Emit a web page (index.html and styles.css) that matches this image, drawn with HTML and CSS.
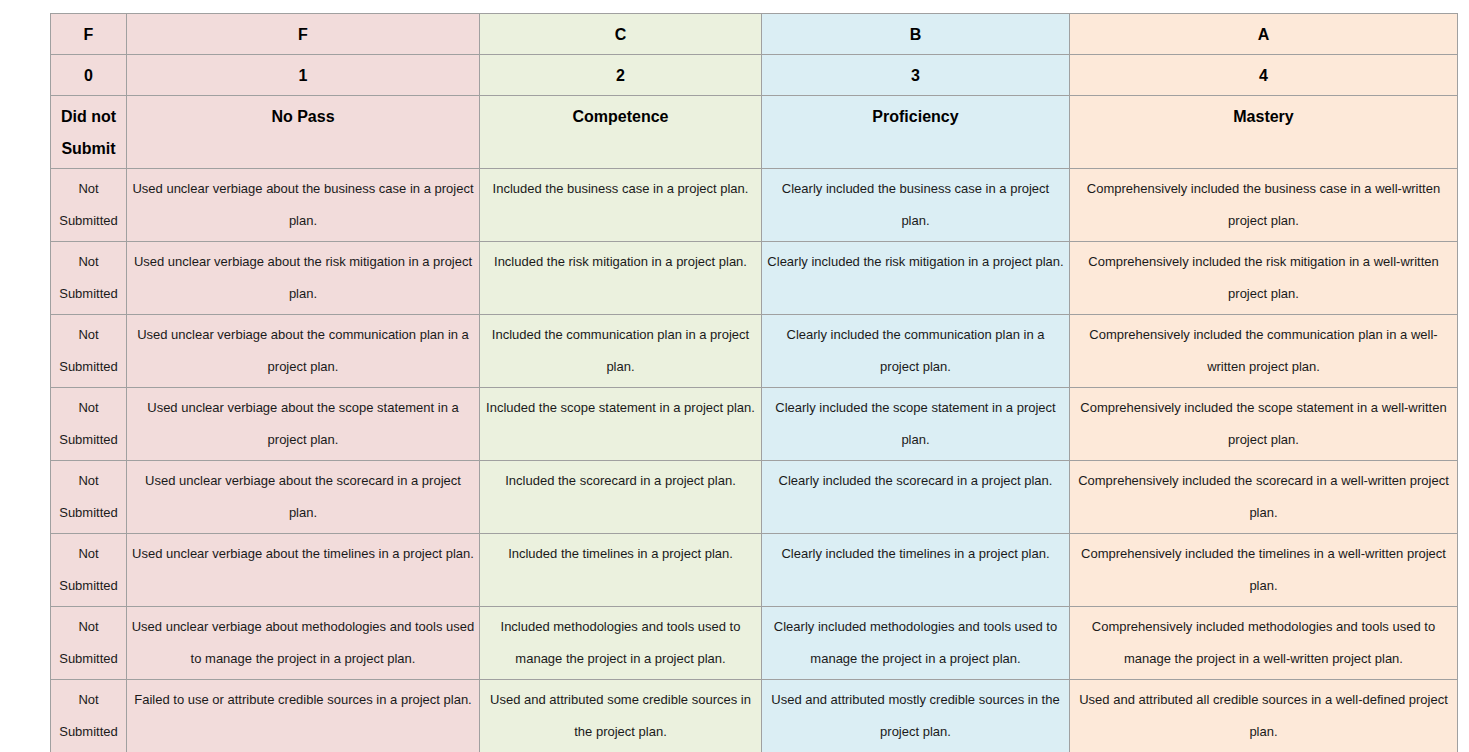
FILE: index.html
```html
<!DOCTYPE html>
<html lang="en">
<head>
<meta charset="utf-8">
<title>Rubric</title>
<link rel="stylesheet" href="styles.css">
</head>
<body>
<table class="rubric">
  <colgroup>
    <col class="c0">
    <col class="c1">
    <col class="c2">
    <col class="c3">
    <col class="c4">
  </colgroup>
  <thead>
    <tr>
      <th class="f">F</th><th class="f">F</th><th class="c">C</th><th class="b">B</th><th class="a">A</th>
    </tr>
    <tr>
      <th class="f">0</th><th class="f">1</th><th class="c">2</th><th class="b">3</th><th class="a">4</th>
    </tr>
    <tr>
      <th class="f">Did not Submit</th><th class="f">No Pass</th><th class="c">Competence</th><th class="b">Proficiency</th><th class="a">Mastery</th>
    </tr>
  </thead>
  <tbody>
    <tr>
      <td class="f">Not Submitted</td>
      <td class="f">Used unclear verbiage about the business case in a project plan.</td>
      <td class="c">Included the business case in a project plan.</td>
      <td class="b">Clearly included the business case in a project plan.</td>
      <td class="a">Comprehensively included the business case in a well-written project plan.</td>
    </tr>
    <tr>
      <td class="f">Not Submitted</td>
      <td class="f">Used unclear verbiage about the risk mitigation in a project plan.</td>
      <td class="c">Included the risk mitigation in a project plan.</td>
      <td class="b">Clearly included the risk mitigation in a project plan.</td>
      <td class="a">Comprehensively included the risk mitigation in a well-written project plan.</td>
    </tr>
    <tr>
      <td class="f">Not Submitted</td>
      <td class="f">Used unclear verbiage about the communication plan in a project plan.</td>
      <td class="c">Included the communication plan in a project plan.</td>
      <td class="b">Clearly included the communication plan in a project plan.</td>
      <td class="a">Comprehensively included the communication plan in a well-written project plan.</td>
    </tr>
    <tr>
      <td class="f">Not Submitted</td>
      <td class="f">Used unclear verbiage about the scope statement in a project plan.</td>
      <td class="c">Included the scope statement in a project plan.</td>
      <td class="b">Clearly included the scope statement in a project plan.</td>
      <td class="a">Comprehensively included the scope statement in a well-written project plan.</td>
    </tr>
    <tr>
      <td class="f">Not Submitted</td>
      <td class="f">Used unclear verbiage about the scorecard in a project plan.</td>
      <td class="c">Included the scorecard in a project plan.</td>
      <td class="b">Clearly included the scorecard in a project plan.</td>
      <td class="a">Comprehensively included the scorecard in a well-written project plan.</td>
    </tr>
    <tr>
      <td class="f">Not Submitted</td>
      <td class="f">Used unclear verbiage about the timelines in a project plan.</td>
      <td class="c">Included the timelines in a project plan.</td>
      <td class="b">Clearly included the timelines in a project plan.</td>
      <td class="a">Comprehensively included the timelines in a well-written project plan.</td>
    </tr>
    <tr>
      <td class="f">Not Submitted</td>
      <td class="f">Used unclear verbiage about methodologies and tools used to manage the project in a project plan.</td>
      <td class="c">Included methodologies and tools used to manage the project in a project plan.</td>
      <td class="b">Clearly included methodologies and tools used to manage the project in a project plan.</td>
      <td class="a">Comprehensively included methodologies and tools used to manage the project in a well-written project plan.</td>
    </tr>
    <tr>
      <td class="f">Not Submitted</td>
      <td class="f">Failed to use or attribute credible sources in a project plan.</td>
      <td class="c">Used and attributed some credible sources in the project plan.</td>
      <td class="b">Used and attributed mostly credible sources in the project plan.</td>
      <td class="a">Used and attributed all credible sources in a well-defined project plan.</td>
    </tr>
  </tbody>
</table>
</body>
</html>
```
FILE: styles.css
```css
html, body {
  margin: 0;
  padding: 0;
  background: #ffffff;
}

body {
  padding: 13px 0 0 50px;
  font-family: "Liberation Sans", Arial, sans-serif;
  color: #111111;
}

.rubric {
  border-collapse: collapse;
  table-layout: fixed;
  width: 1408px;
}

.c0 { width: 76px; }
.c1 { width: 353px; }
.c2 { width: 282px; }
.c3 { width: 308px; }
.c4 { width: 388px; }

.rubric th,
.rubric td {
  border: 1px solid #a0a0a0;
  padding: 4px 5px;
  text-align: center;
  vertical-align: top;
  line-height: 32px;
}

.rubric th {
  padding-top: 5px;
  padding-bottom: 3px;
  font-size: 16px;
  font-weight: bold;
  color: #000000;
}

.rubric td {
  font-size: 13px;
  font-weight: normal;
  color: #1a1a1a;
}

.rubric td:nth-child(2) {
  padding-left: 4px;
  padding-right: 4px;
}

.f { background: #f2dcdb; }
.c { background: #ebf1de; }
.b { background: #dbeef4; }
.a { background: #fde9d9; }
```
